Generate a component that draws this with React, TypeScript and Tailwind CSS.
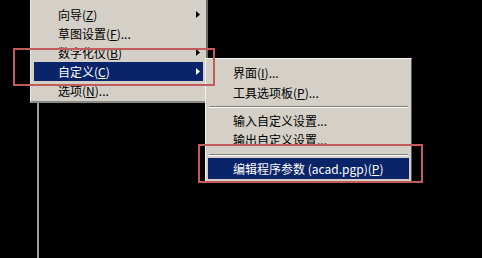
import React from 'react';

type Item = {
  label: string;
  key?: string;
  tail?: string;
  arrow?: boolean;
  active?: boolean;
};

const mainItems: Item[] = [
  { label: '向导', key: 'Z', arrow: true },
  { label: '草图设置', key: 'F', tail: '...' },
  { label: '数字化仪', key: 'B', arrow: true },
  { label: '自定义', key: 'C', arrow: true, active: true },
  { label: '选项', key: 'N', tail: '...' }
];

function Arrow({ white }: { white?: boolean }) {
  return (
    <svg width="4" height="7" viewBox="0 0 4 7" className="shrink-0">
      <path d="M0 0 L4 3.5 L0 7 Z" fill={white ? '#ffffff' : '#000000'} />
    </svg>
  );
}

function Label({ item }: { item: Item }) {
  return (
    <span className="whitespace-nowrap">
      {item.label}
      {item.key && (
        <>
          (<span className="underline">{item.key}</span>)
        </>
      )}
      {item.tail}
    </span>
  );
}

function Separator() {
  return (
    <div className="h-[8px] flex flex-col justify-center px-[1px]">
      <div className="h-px bg-[#808080]" />
      <div className="h-px bg-white" />
    </div>
  );
}

export default function App() {
  return (
    <div
      className="relative w-[482px] h-[258px] overflow-hidden bg-black text-[12px] leading-none text-black"
      style={{ fontFamily: '"Noto Sans CJK SC", "Noto Sans", sans-serif' }}
    >
      {/* 主菜单 */}
      <div className="ml-[30px] w-[178px] bg-[#d4d0c8] pt-[5px] pb-[1px] px-[3px] border-l border-[#ecebe6] border-r-[2px] border-r-[#6e6c68] border-b-[2px] border-b-[#8a8884]">
        {mainItems.map((item) => (
          <div
            key={item.label}
            className={
              'h-[19px] flex items-center justify-between pl-[24px] pr-[3px] ' +
              (item.active ? 'bg-[#0a246a] text-white' : '')
            }
          >
            <Label item={item} />
            {item.arrow && <Arrow white={item.active} />}
          </div>
        ))}
      </div>

      {/* 竖线 */}
      <div className="ml-[37px] w-[2px] h-[160px] bg-[#9c9c9c]" />

      {/* 子菜单 */}
      <div className="absolute left-[205px] top-[58px] w-[207px] bg-[#d4d0c8] pt-[4px] pb-[3px] px-[2px] border-l border-t border-[#f4f3ef] border-r border-r-[#5a5855] border-b border-b-[#5a5855]">
        <div className="h-[20px] flex items-center pl-[25px]">
          <Label item={{ label: '界面', key: 'I', tail: '...' }} />
        </div>
        <div className="h-[20px] flex items-center pl-[25px]">
          <Label item={{ label: '工具选项板', key: 'P', tail: '...' }} />
        </div>
        <Separator />
        <div className="h-[20px] flex items-center pl-[25px]">
          <span>输入自定义设置...</span>
        </div>
        <div className="h-[20px] flex items-center pl-[25px] pb-[3px]">
          <span>输出自定义设置...</span>
        </div>
        <div className="h-[7px] flex flex-col justify-center px-[1px]">
          <div className="h-px bg-[#808080]" />
          <div className="h-px bg-white" />
        </div>
        <div className="h-[21px] flex items-center pl-[25px] bg-[#0a246a] text-white">
          <span className="whitespace-nowrap">
            编辑程序参数 (acad.pgp)(<span className="underline">P</span>)
          </span>
        </div>
      </div>

      {/* 红框标注 */}
      <div className="absolute left-[13px] top-[48px] w-[202px] h-[38px] border-2 border-[#c25c5a]" />
      <div className="absolute left-[198px] top-[144px] w-[225px] h-[39px] border-2 border-[#c25c5a]" />
    </div>
  );
}
